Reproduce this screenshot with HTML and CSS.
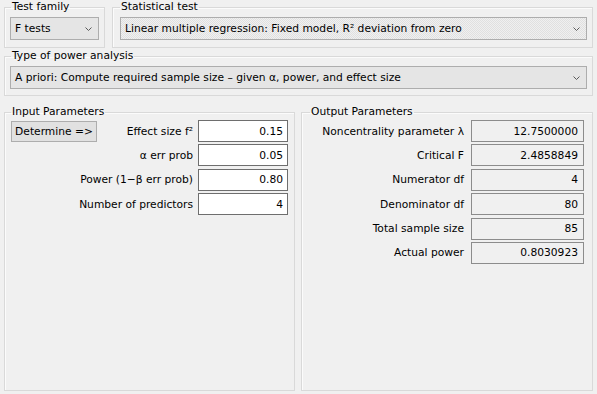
FILE: index.html
```html
<!DOCTYPE html>
<html>
<head>
<meta charset="utf-8">
<link rel="stylesheet" href="styles.css">
</head>
<body>
<div class="app">
  <div class="top-row">
    <fieldset class="group g-family">
      <legend>Test family</legend>
      <div class="combo"><span>F tests</span><svg class="chev" width="7" height="4" viewBox="0 0 7 4"><polyline points="0.5,0.5 3.5,3.5 6.5,0.5" fill="none" stroke="#5a5a5a" stroke-width="1"/></svg></div>
    </fieldset>
    <fieldset class="group g-test">
      <legend>Statistical test</legend>
      <div class="combo focused"><span>Linear multiple regression: Fixed model, R² deviation from zero</span><svg class="chev" width="7" height="4" viewBox="0 0 7 4"><polyline points="0.5,0.5 3.5,3.5 6.5,0.5" fill="none" stroke="#5a5a5a" stroke-width="1"/></svg></div>
    </fieldset>
  </div>
  <fieldset class="group g-type">
    <legend>Type of power analysis</legend>
    <div class="combo"><span>A priori: Compute required sample size – given α, power, and effect size</span><svg class="chev" width="7" height="4" viewBox="0 0 7 4"><polyline points="0.5,0.5 3.5,3.5 6.5,0.5" fill="none" stroke="#5a5a5a" stroke-width="1"/></svg></div>
  </fieldset>
  <div class="params-row">
    <fieldset class="group g-input">
      <legend>Input Parameters</legend>
      <div class="in-grid">
        <button class="btn">Determine =&gt;</button>
        <span class="lbl">Effect size f²</span>
        <span class="box in">0.15</span>
        <span class="lbl wide">α err prob</span>
        <span class="box in">0.05</span>
        <span class="lbl wide">Power (1−β err prob)</span>
        <span class="box in">0.80</span>
        <span class="lbl wide">Number of predictors</span>
        <span class="box in">4</span>
      </div>
    </fieldset>
    <fieldset class="group g-output">
      <legend>Output Parameters</legend>
      <div class="out-grid">
        <span class="lbl">Noncentrality parameter λ</span>
        <span class="box out">12.7500000</span>
        <span class="lbl">Critical F</span>
        <span class="box out">2.4858849</span>
        <span class="lbl">Numerator df</span>
        <span class="box out">4</span>
        <span class="lbl">Denominator df</span>
        <span class="box out">80</span>
        <span class="lbl">Total sample size</span>
        <span class="box out">85</span>
        <span class="lbl">Actual power</span>
        <span class="box out">0.8030923</span>
      </div>
    </fieldset>
  </div>
</div>
</body>
</html>
```
FILE: styles.css
```css
html, body {
  margin: 0;
  padding: 0;
  background: #f0f0f0;
}
body {
  font-family: "DejaVu Sans", "Liberation Sans", sans-serif;
  font-size: 10.7px;
  color: #000;
}
.app {
  width: 597px;
  height: 394px;
  box-sizing: border-box;
  padding: 1px 4px 3px 4px;
  display: flex;
  flex-direction: column;
}
.group {
  margin: 0;
  border: 1px solid #d9d9d9;
  box-shadow: inset 1px 1px 0 #fbfbfb;
  min-width: 0;
}
.group legend {
  line-height: 12px;
  padding: 0 1px;
  margin-left: 1px;
}
.top-row {
  display: flex;
  gap: 7px;
}
.g-family {
  width: 101px;
  box-sizing: border-box;
  padding: 4px 5px 7px 5px;
}
.g-test {
  flex: 1;
  padding: 4px 5px 7px 7px;
}
.g-test legend {
  margin-left: 0;
}
.g-type {
  margin-top: 2px;
  padding: 4px 5px 6px 5px;
}
.combo {
  height: 23px;
  box-sizing: border-box;
  border: 1px solid #adadad;
  background: #e5e5e5;
  display: flex;
  align-items: center;
  justify-content: space-between;
  padding: 0 6px 0 4px;
  white-space: nowrap;
}
.combo.focused {
  background: repeating-conic-gradient(#e0e0e0 0 25%, #f0f0f0 0 50%) 0 0 / 2px 2px;
}
.chev {
  display: block;
  flex: none;
}
.params-row {
  flex: 1;
  display: flex;
  gap: 6px;
  margin-top: 10px;
}
.g-input {
  width: 291px;
  box-sizing: border-box;
  padding: 2px 6px 0 6px;
}
.g-input legend {
  margin-left: 0;
}
.g-output {
  flex: 1;
  padding: 2px 8px 0 6px;
}
.g-output legend {
  margin-left: 2px;
}
.in-grid {
  display: grid;
  grid-template-columns: 86px 1fr 90px;
  column-gap: 5px;
  row-gap: 2.4px;
  align-items: center;
}
.btn {
  font: inherit;
  color: #000;
  height: 21px;
  margin-top: 1px;
  padding: 0;
  border: 1px solid #adadad;
  background: #e1e1e1;
  text-align: center;
  align-self: start;
}
.lbl {
  text-align: right;
  white-space: nowrap;
}
.lbl.wide {
  grid-column: 1 / 3;
}
.box {
  height: 22px;
  box-sizing: border-box;
  display: flex;
  align-items: center;
  justify-content: flex-end;
  padding-right: 4px;
}
.box.in {
  background: #fff;
  border: 1px solid #6e6e6e;
}
.out-grid {
  display: grid;
  grid-template-columns: 1fr 113px;
  column-gap: 7px;
  row-gap: 2.4px;
  align-items: center;
}
.box.out {
  background: #f0f0f0;
  border: 1px solid #8c8c8c;
  padding-right: 5px;
}
```
